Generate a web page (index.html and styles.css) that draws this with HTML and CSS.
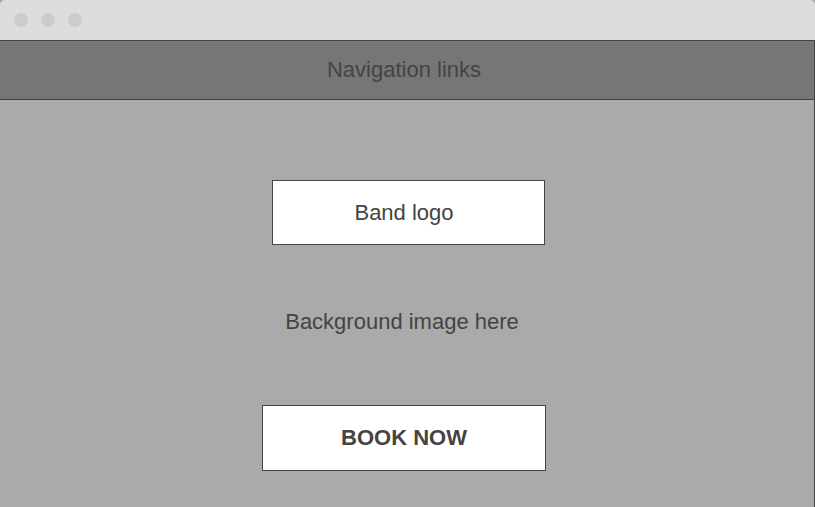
FILE: index.html
```html
<!DOCTYPE html>
<html lang="en">
<head>
    <meta charset="UTF-8">
    <meta name="viewport" content="width=device-width, initial-scale=1.0">
    <title>Band Landing Wireframe</title>
    <link rel="stylesheet" href="styles.css">
</head>
<body>
    <div class="window">
        <div class="titlebar">
            <span class="dot"></span>
            <span class="dot"></span>
            <span class="dot"></span>
        </div>

        <div class="page">
            <nav class="nav">Navigation links</nav>

            <main class="hero">
                <div class="logo-box">Band logo</div>
                <p class="bg-note">Background image here</p>
                <button type="button" class="book-btn">BOOK NOW</button>
            </main>
        </div>
    </div>
</body>
</html>
```

FILE: styles.css
```css
body {
    margin: 0;
    padding: 0;
    font-family: "Liberation Sans", Arial, sans-serif;
    background-color: #aaaaaa;
    overflow: hidden;
}

.window {
    width: 815px;
    height: 507px;
    display: flex;
    flex-direction: column;
}

.titlebar {
    height: 40px;
    background-color: #dddddd;
    border-radius: 5px 5px 0 0;
    display: flex;
    align-items: center;
    gap: 13px;
    padding-left: 14px;
}

.dot {
    width: 14px;
    height: 14px;
    border-radius: 50%;
    background-color: #cccccc;
}

.page {
    flex: 1;
    width: 814px;
    border-right: 1px solid #444444;
    background-color: #aaaaaa;
}

.nav {
    height: 58px;
    background-color: #767676;
    border-top: 1px solid #444444;
    border-bottom: 1px solid #444444;
    display: flex;
    justify-content: center;
    align-items: center;
    font-size: 22px;
    color: #444444;
    padding-right: 6px;
}

.hero {
    display: flex;
    flex-direction: column;
    align-items: center;
    color: #444444;
}

.logo-box {
    box-sizing: border-box;
    margin-top: 80px;
    margin-left: 3px;
    width: 273px;
    height: 65px;
    background-color: #ffffff;
    border: 1px solid #444444;
    display: flex;
    justify-content: center;
    align-items: center;
    font-size: 22px;
    padding-right: 9px;
}

.bg-note {
    margin: 64px 10px 0 0;
    font-size: 22px;
    line-height: 25px;
}

.book-btn {
    margin: 71px 6px 0 0;
    width: 284px;
    height: 66px;
    background-color: #ffffff;
    border: 1px solid #444444;
    border-radius: 0;
    font-family: "Liberation Sans", Arial, sans-serif;
    font-size: 22px;
    font-weight: bold;
    color: #444444;
    cursor: pointer;
}
```
